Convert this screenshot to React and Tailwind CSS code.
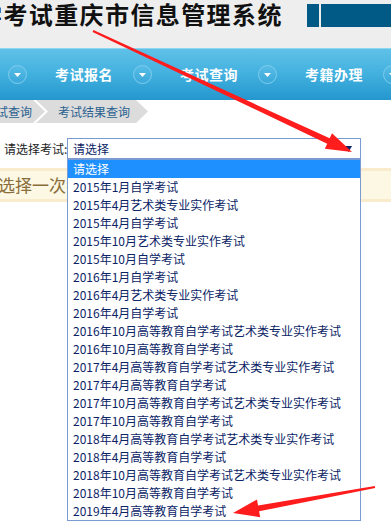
import React from 'react'

const exams = [
  '请选择',
  '2015年1月自学考试',
  '2015年4月艺术类专业实作考试',
  '2015年4月自学考试',
  '2015年10月艺术类专业实作考试',
  '2015年10月自学考试',
  '2016年1月自学考试',
  '2016年4月艺术类专业实作考试',
  '2016年4月自学考试',
  '2016年10月高等教育自学考试艺术类专业实作考试',
  '2016年10月高等教育自学考试',
  '2017年4月高等教育自学考试艺术类专业实作考试',
  '2017年4月高等教育自学考试',
  '2017年10月高等教育自学考试艺术类专业实作考试',
  '2017年10月高等教育自学考试',
  '2018年4月高等教育自学考试艺术类专业实作考试',
  '2018年4月高等教育自学考试',
  '2018年10月高等教育自学考试艺术类专业实作考试',
  '2018年10月高等教育自学考试',
  '2019年4月高等教育自学考试',
]

const menu = ['考试报名', '考试查询', '考籍办理']

// polygon points for a tapering arrow from tail to tip
function arrowPoints(x1, y1, x2, y2, w0, w1, headLen, headW) {
  const dx = x2 - x1
  const dy = y2 - y1
  const len = Math.hypot(dx, dy)
  const ux = dx / len
  const uy = dy / len
  const nx = -uy
  const ny = ux
  const bx = x2 - ux * headLen
  const by = y2 - uy * headLen
  const p = [
    [x1 + nx * w0 / 2, y1 + ny * w0 / 2],
    [bx + nx * w1 / 2, by + ny * w1 / 2],
    [bx + nx * headW / 2, by + ny * headW / 2],
    [x2, y2],
    [bx - nx * headW / 2, by - ny * headW / 2],
    [bx - nx * w1 / 2, by - ny * w1 / 2],
    [x1 - nx * w0 / 2, y1 - ny * w0 / 2],
  ]
  return p.map(([x, y]) => `${x.toFixed(1)},${y.toFixed(1)}`).join(' ')
}

function NavDot() {
  return (
    <div className="w-[19px] h-[19px] rounded-full bg-gradient-to-b from-[#57bde6] to-[#3aa8da] border border-[#7fcdee] flex items-center justify-center shrink-0">
      <svg width="7" height="4" viewBox="0 0 7 4">
        <path d="M0 0 L7 0 L3.5 4 Z" fill="#ffffff" />
      </svg>
    </div>
  )
}

export default function App() {
  return (
    <div className="relative w-[391px] h-[531px] overflow-hidden bg-white font-['Noto_Sans_CJK_SC','Noto_Sans',sans-serif]">

      <header className="h-[48px] bg-[#eeeeee] flex items-start overflow-hidden">
        <h1 className="ml-[-22px] mt-[-3px] text-[24px] leading-[34px] font-bold tracking-[1.4px] text-[#111111] whitespace-nowrap">
          学考试重庆市信息管理系统
        </h1>
        <div className="ml-auto mt-[4px] flex gap-[2px]">
          <div className="w-[12px] h-[23px] bg-[#015a86]"></div>
          <div className="w-[70px] h-[23px] bg-[#015a86]"></div>
        </div>
      </header>

      <nav className="h-[52px] border-t border-[#8fd6f1] bg-gradient-to-b from-[#5fc1e8] via-[#41b0de] to-[#2497cf] flex items-center">
        {menu.map(m => (
          <div key={m} className="w-[125px] shrink-0 flex items-center pl-[8px]">
            <NavDot />
            <span className="ml-[28px] text-[14px] font-bold text-white tracking-[0.5px] whitespace-nowrap">{m}</span>
          </div>
        ))}
        <div className="pl-[8px]"><NavDot /></div>
      </nav>

      <div className="h-[23px] flex text-[12px] text-[#2a6190]">
        <div className="ml-[-30px] w-[75px] bg-[#dcdcdc] pl-[14px] flex items-center whitespace-nowrap [clip-path:polygon(0_0,calc(100%-12px)_0,100%_50%,calc(100%-12px)_100%,0_100%)]">
          考试查询
        </div>
        <div className="ml-[-9px] w-[112px] bg-[#dcdcdc] pl-[22px] flex items-center whitespace-nowrap [clip-path:polygon(0_0,calc(100%-12px)_0,100%_50%,calc(100%-12px)_100%,0_100%,12px_50%)]">
          考试结果查询
        </div>
      </div>

      <div className="mt-[15px] h-[21px] flex items-center">
        <span className="pl-[4px] w-[67px] text-[12px] text-[#222222] whitespace-nowrap overflow-hidden">请选择考试:</span>
        <div className="w-[294px] h-[21px] border border-[#7a9ad2] bg-white flex items-center pl-[5px] pr-[8px]">
          <span className="text-[12px] text-[#0b2466]">请选择</span>
          <svg className="ml-auto" width="7" height="6" viewBox="0 0 7 6">
            <path d="M0 0 L7 0 L3.5 6 Z" fill="#0b2466" />
          </svg>
        </div>
      </div>

      <div className="mt-[9px] h-[34px] border-y-[3px] border-[#faebcc] bg-[#fcf8e3] flex items-center overflow-hidden">
        <span className="ml-[-19px] text-[17px] text-[#8a6d3b] whitespace-nowrap">请选择一次考试</span>
      </div>

      <ul className="absolute left-[67px] top-[159px] w-[294px] border border-[#7a9ad2] bg-white text-[12px]">
        {exams.map((e, i) => (
          <li
            key={e}
            className={`h-[18px] leading-[18px] pl-[5px] whitespace-nowrap ${
              i === 0 ? 'bg-[#1e90ff] text-white' : 'text-[#0b2466]'
            }`}
          >
            {e}
          </li>
        ))}
      </ul>

      <svg className="absolute left-0 top-0 pointer-events-none" width="391" height="531">
        <polygon points={arrowPoints(93, 31, 352, 152, 2, 6, 26, 17)} fill="#ff1c1c" />
        <polygon points={arrowPoints(375, 487, 233, 513, 2, 6, 26, 18)} fill="#ff1c1c" />
      </svg>
    </div>
  )
}
